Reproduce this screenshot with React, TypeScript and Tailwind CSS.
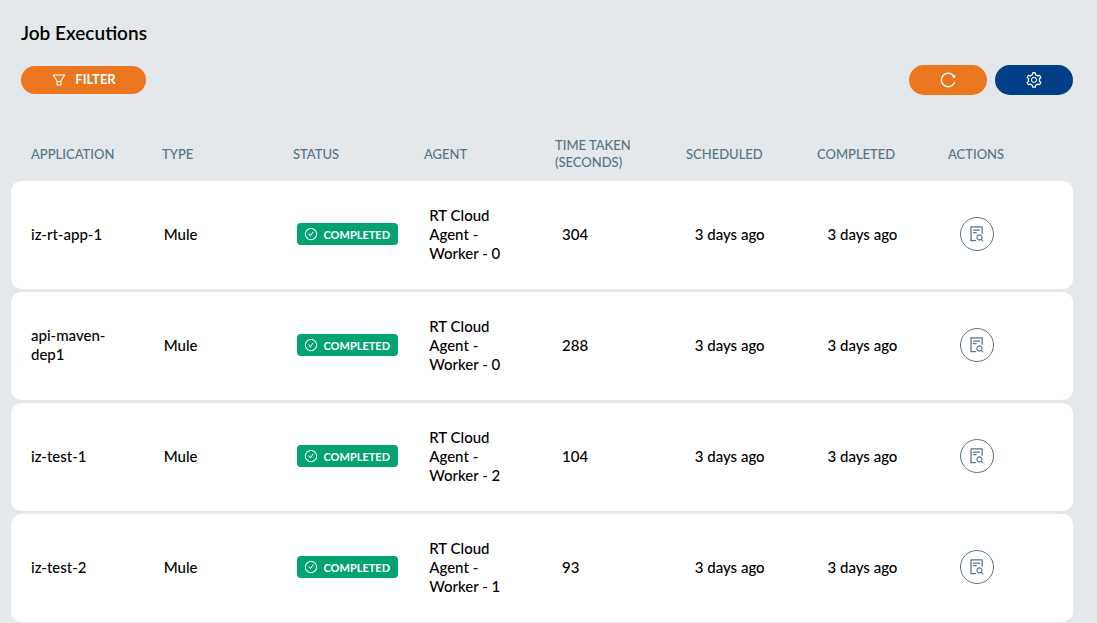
import React from 'react';
import {
    AiOutlineCheckCircle,
    AiOutlineFileSearch,
    AiOutlineFilter,
    AiOutlineReload,
    AiOutlineSetting,
} from 'react-icons/ai';

interface JobExecution {
    application: string;
    type: string;
    status: string;
    agent: string;
    timeTaken: number;
    scheduled: string;
    completed: string;
}

const columns = ['Application', 'Type', 'Status', 'Agent', 'Time Taken (Seconds)', 'Scheduled', 'Completed', 'Actions'];

const jobs: JobExecution[] = [
    { application: 'iz-rt-app-1', type: 'Mule', status: 'Completed', agent: 'RT Cloud Agent - Worker - 0', timeTaken: 304, scheduled: '3 days ago', completed: '3 days ago' },
    { application: 'api-maven-dep1', type: 'Mule', status: 'Completed', agent: 'RT Cloud Agent - Worker - 0', timeTaken: 288, scheduled: '3 days ago', completed: '3 days ago' },
    { application: 'iz-test-1', type: 'Mule', status: 'Completed', agent: 'RT Cloud Agent - Worker - 2', timeTaken: 104, scheduled: '3 days ago', completed: '3 days ago' },
    { application: 'iz-test-2', type: 'Mule', status: 'Completed', agent: 'RT Cloud Agent - Worker - 1', timeTaken: 93, scheduled: '3 days ago', completed: '3 days ago' },
];

const StatusBadge: React.FC<{ status: string }> = ({ status }) => (
    <span className="inline-flex h-[22px] items-center gap-1.5 whitespace-nowrap rounded-sm bg-[#02a273] pl-[7px] pr-2 align-middle text-[11px] font-bold uppercase text-white">
        <AiOutlineCheckCircle className="size-3.5 shrink-0" />
        {status}
    </span>
);

const IconButton: React.FC<{ label: string; className: string; children: React.ReactNode }> = ({ label, className, children }) => (
    <button type="button" aria-label={label} className={`flex h-[30px] w-[78px] items-center justify-center rounded-full text-lg text-white ${className}`}>
        {children}
    </button>
);

const Cell: React.FC<{ children: React.ReactNode }> = ({ children }) => <td className="px-5">{children}</td>;

const JobRow: React.FC<{ job: JobExecution }> = ({ job }) => (
    <tr className="grid min-h-[108px] grid-cols-8 items-center rounded-[10px] bg-white pb-[26px] pt-6">
        <Cell>{job.application}</Cell>
        <Cell>{job.type}</Cell>
        <Cell><StatusBadge status={job.status} /></Cell>
        <Cell>{job.agent}</Cell>
        <Cell>{job.timeTaken}</Cell>
        <Cell>{job.scheduled}</Cell>
        <Cell>{job.completed}</Cell>
        <Cell>
            <button
                type="button"
                aria-label={`View ${job.application}`}
                className="flex size-[34px] items-center justify-center rounded-full border border-[#577484] text-lg text-[#577484]"
            >
                <AiOutlineFileSearch />
            </button>
        </Cell>
    </tr>
);

const App: React.FC = () => (
    <main className="min-h-screen bg-[#e4e8eb] pl-[11px] pr-6 pt-5 font-['Lato',sans-serif] text-black">
        <h1 className="pl-2.5 text-[19px] font-semibold leading-[26px]">Job Executions</h1>

        <div className="mt-[19px] flex items-center justify-between pl-2.5">
            <button type="button" className="flex h-7 w-[125px] items-center justify-center gap-2 rounded-full bg-[#ea761f] text-[13px] font-bold text-white">
                <AiOutlineFilter className="size-4" />
                FILTER
            </button>
            <div className="flex gap-2">
                <IconButton label="Refresh" className="bg-[#ea761f]"><AiOutlineReload /></IconButton>
                <IconButton label="Settings" className="bg-[#003f87]"><AiOutlineSetting /></IconButton>
            </div>
        </div>

        <table className="mt-8 block w-full text-[15px] font-medium leading-[19px]">
            <thead className="block">
                <tr className="grid h-[54px] grid-cols-8 items-center pr-3.5 text-left text-[13px] leading-[17px] text-[#577484]">
                    {columns.map((column) => (
                        <th key={column} scope="col" className="pl-5 pr-4 font-medium uppercase">{column}</th>
                    ))}
                </tr>
            </thead>
            <tbody className="flex flex-col gap-[3px]">
                {jobs.map((job) => <JobRow key={job.application} job={job} />)}
            </tbody>
        </table>
    </main>
);

export default App;
